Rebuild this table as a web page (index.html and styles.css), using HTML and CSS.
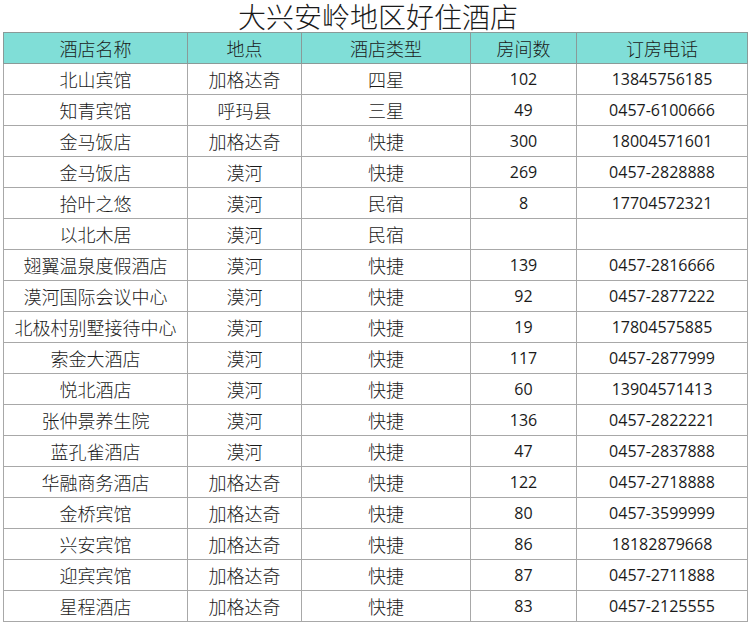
FILE: index.html
```html
<!DOCTYPE html>
<html lang="zh">
<head>
<meta charset="utf-8">
<link rel="stylesheet" href="styles.css">
</head>
<body>
<div class="sheet">
  <h1 class="title">大兴安岭地区好住酒店</h1>
  <table class="hotels">
    <colgroup>
      <col class="c-name"><col class="c-place"><col class="c-type"><col class="c-rooms"><col class="c-phone">
    </colgroup>
    <thead>
      <tr><th>酒店名称</th><th>地点</th><th>酒店类型</th><th>房间数</th><th>订房电话</th></tr>
    </thead>
    <tbody>
      <tr><td>北山宾馆</td><td>加格达奇</td><td>四星</td><td class="num">102</td><td class="num">13845756185</td></tr>
      <tr><td>知青宾馆</td><td>呼玛县</td><td>三星</td><td class="num">49</td><td class="num">0457-6100666</td></tr>
      <tr><td>金马饭店</td><td>加格达奇</td><td>快捷</td><td class="num">300</td><td class="num">18004571601</td></tr>
      <tr><td>金马饭店</td><td>漠河</td><td>快捷</td><td class="num">269</td><td class="num">0457-2828888</td></tr>
      <tr><td>拾叶之悠</td><td>漠河</td><td>民宿</td><td class="num">8</td><td class="num">17704572321</td></tr>
      <tr><td>以北木居</td><td>漠河</td><td>民宿</td><td class="num"></td><td class="num"></td></tr>
      <tr><td>翅翼温泉度假酒店</td><td>漠河</td><td>快捷</td><td class="num">139</td><td class="num">0457-2816666</td></tr>
      <tr><td>漠河国际会议中心</td><td>漠河</td><td>快捷</td><td class="num">92</td><td class="num">0457-2877222</td></tr>
      <tr><td>北极村别墅接待中心</td><td>漠河</td><td>快捷</td><td class="num">19</td><td class="num">17804575885</td></tr>
      <tr><td>索金大酒店</td><td>漠河</td><td>快捷</td><td class="num">117</td><td class="num">0457-2877999</td></tr>
      <tr><td>悦北酒店</td><td>漠河</td><td>快捷</td><td class="num">60</td><td class="num">13904571413</td></tr>
      <tr><td>张仲景养生院</td><td>漠河</td><td>快捷</td><td class="num">136</td><td class="num">0457-2822221</td></tr>
      <tr><td>蓝孔雀酒店</td><td>漠河</td><td>快捷</td><td class="num">47</td><td class="num">0457-2837888</td></tr>
      <tr><td>华融商务酒店</td><td>加格达奇</td><td>快捷</td><td class="num">122</td><td class="num">0457-2718888</td></tr>
      <tr><td>金桥宾馆</td><td>加格达奇</td><td>快捷</td><td class="num">80</td><td class="num">0457-3599999</td></tr>
      <tr><td>兴安宾馆</td><td>加格达奇</td><td>快捷</td><td class="num">86</td><td class="num">18182879668</td></tr>
      <tr><td>迎宾宾馆</td><td>加格达奇</td><td>快捷</td><td class="num">87</td><td class="num">0457-2711888</td></tr>
      <tr><td>星程酒店</td><td>加格达奇</td><td>快捷</td><td class="num">83</td><td class="num">0457-2125555</td></tr>
    </tbody>
  </table>
</div>
</body>
</html>
```
FILE: styles.css
```css
html, body {
  margin: 0;
  padding: 0;
  background: #fff;
}
body {
  font-family: "Noto Sans CJK SC", sans-serif;
  color: #1a1a1a;
}
.sheet {
  padding: 0 0 0 3px;
  width: 744px;
}
.title {
  margin: 0;
  height: 32px;
  line-height: 32px;
  font-size: 28px;
  font-weight: 300;
  text-align: center;
  padding-left: 6px;
}
.hotels {
  border-collapse: collapse;
  table-layout: fixed;
  width: 744px;
}
.c-name { width: 184px; }
.c-place { width: 114px; }
.c-type { width: 169px; }
.c-rooms { width: 106px; }
.c-phone { width: 171px; }
.hotels th,
.hotels td {
  height: 30px;
  padding: 0;
  border: 1px solid #a8a8a8;
  text-align: center;
  vertical-align: middle;
  font-size: 18px;
  font-weight: 300;
  line-height: 30px;
  white-space: nowrap;
  overflow: hidden;
}
.hotels th {
  background: #80ded7;
  border-color: #8a9a98;
}
.hotels td.num {
  font-family: "Open Sans", sans-serif;
  font-size: 16px;
  font-weight: 400;
}
```
